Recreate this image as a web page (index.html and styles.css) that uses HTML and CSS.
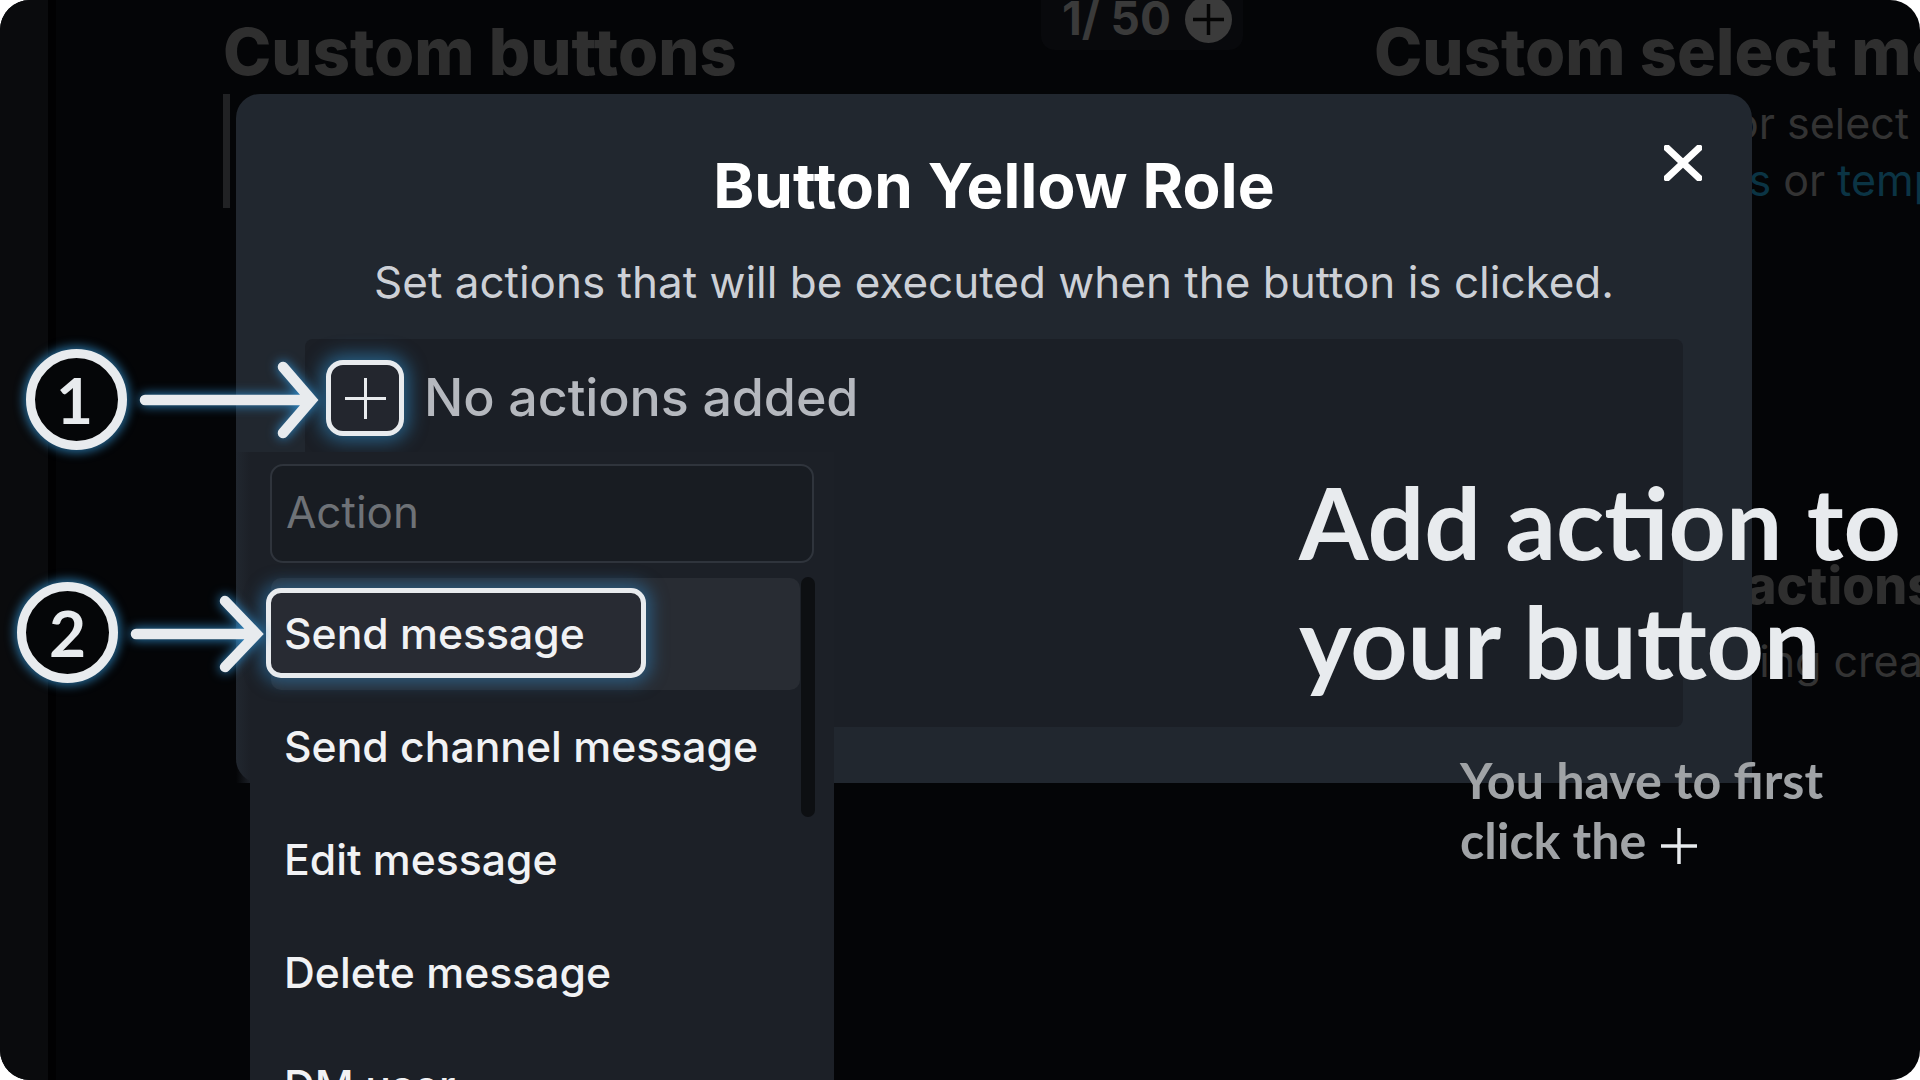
FILE: index.html
```html
<!DOCTYPE html>
<html lang="en">
<head>
<meta charset="utf-8">
<title>Button Yellow Role</title>
<link rel="stylesheet" href="styles.css">
</head>
<body>
<div class="screen">
  <div class="backdrop">
    <div class="rail"></div>
    <section class="col-buttons">
      <h2 class="bg-heading">Custom buttons</h2>
      <div class="bg-bar"></div>
    </section>
    <div class="counter">
      <span class="counter-text">1/ 50</span>
      <span class="counter-add"><svg viewBox="0 0 47 47" class="counter-icon"><path d="M8 23.5H39M23.5 8V39"/></svg></span>
    </div>
    <section class="col-menus">
      <h2 class="bg-heading">Custom select menus</h2>
      <p class="bg-line line-select">or select</p>
      <p class="bg-line line-links"><span class="bg-link">actions</span> or <span class="bg-link">templates</span></p>
      <p class="bg-strong">actions</p>
      <p class="bg-line line-crea">Saving creates</p>
    </section>
  </div>

  <div class="modal">
    <svg class="close" viewBox="0 0 38 36"><path d="M3 3L35 33M35 3L3 33"/></svg>
    <h1 class="modal-title">Button Yellow Role</h1>
    <p class="modal-sub">Set actions that will be executed when the button is clicked.</p>
    <div class="panel">
      <div class="add-row">
        <button class="add-btn"><svg viewBox="0 0 41 41" class="add-icon"><path d="M0 20.5H41M20.5 0V41"/></svg></button>
        <span class="add-label">No actions added</span>
      </div>
    </div>
    <div class="picker">
      <div class="picker-input">Action</div>
      <div class="menu">
        <div class="menu-scroll"></div>
        <div class="menu-hover"><span class="menu-selected">Send message</span></div>
        <div class="menu-item">Send channel message</div>
        <div class="menu-item">Edit message</div>
        <div class="menu-item">Delete message</div>
        <div class="menu-item">DM user</div>
      </div>
    </div>
  </div>

  <div class="callout callout-one">
    <div class="badge">1</div>
    <svg class="arrow arrow-one" viewBox="0 0 186 80"><path d="M9 40H172M147 7L175.500 40L147 73"/></svg>
  </div>
  <div class="callout callout-two">
    <div class="badge">2</div>
    <svg class="arrow arrow-two" viewBox="0 0 139 80"><path d="M8 41H124M97 8L128.500 41L97 74"/></svg>
  </div>

  <div class="hint">
    <p class="hint-title">Add action to<br>your button</p>
    <p class="hint-sub">You have to first<br>click the <svg viewBox="0 0 36 36" class="hint-plus"><path d="M0 18H36M18 0V36"/></svg></p>
  </div>
</div>
</body>
</html>
```
FILE: styles.css
```css
* { box-sizing: border-box; margin: 0; padding: 0; }
html, body { width: 1920px; height: 1080px; background: #fff; overflow: hidden; }
body { font-family: "Inter", "Liberation Sans", sans-serif; }

.screen {
  position: relative;
  width: 1920px;
  height: 1080px;
  border-radius: 30px;
  overflow: hidden;
  background: #040507;
}

/* dimmed page behind the modal */
.backdrop { display: flex; height: 100%; color: #2f2f2f; }
.rail { width: 56px; flex: none; background: #0a0b0d; border-right: 8px solid #010102; }
.col-buttons { width: 985px; flex: none; padding: 14px 0 0 167px; }
.bg-heading { font-size: 65px; font-weight: 800; line-height: 75px; white-space: nowrap; letter-spacing: 0; }
.bg-bar { width: 7px; height: 114px; margin-top: 5px; background: #212224; }
.counter {
  width: 202px; height: 50px; flex: none;
  display: flex; align-items: flex-start; gap: 14px;
  padding-left: 21px;
  background: #08090c;
  border-radius: 0 0 14px 14px;
}
.counter-text { font-size: 46px; font-weight: 700; line-height: 38px; margin-top: -1px; color: #3a3a3a; white-space: nowrap; }
.counter-add { width: 47px; height: 47px; flex: none; margin-top: -4px; border-radius: 50%; background: #3b3b3b; }
.counter-icon { display: block; fill: none; stroke: #050505; stroke-width: 3.5; }
.col-menus { flex: none; width: 546px; padding: 14px 0 0 0; margin-left: 131px; overflow: hidden; }
.bg-line { font-size: 43px; line-height: 50px; color: #333; white-space: nowrap; }
.line-select { margin: 9px 0 0 359px; }
.line-links { margin: 7px 0 0 250px; }
.bg-link { color: #0b3444; }
.bg-strong { margin: 351px 0 0 372px; font-size: 52px; font-weight: 800; line-height: 60px; color: #2f2f2f; }
.line-crea { margin: 20px 0 0 310px; }

/* modal */
.modal {
  position: absolute;
  left: 236px; top: 94px;
  width: 1516px; height: 689px;
  padding: 57px 69px 0;
  display: flex; flex-direction: column; align-items: center;
  background: #21272f;
  border-radius: 24px 24px 0 24px;
}
.close { position: absolute; right: 50px; top: 51px; width: 38px; height: 36px; fill: none; stroke: #fff; stroke-width: 7; stroke-linecap: round; }
.modal-title { font-size: 62px; font-weight: 700; line-height: 70px; color: #fff; white-space: nowrap; letter-spacing: 0.15px; }
.modal-sub { margin-top: 37px; font-size: 44px; line-height: 48px; color: #cdd0d6; white-space: nowrap; }
.panel { width: 100%; height: 388px; margin-top: 33px; padding: 21px; background: #1b1f26; border-radius: 8px; }
.add-row { display: flex; align-items: center; gap: 20px; }
.add-btn {
  width: 78px; height: 76px; flex: none;
  display: flex; align-items: center; justify-content: center;
  background: #23262e;
  border: 5px solid #e8ebee;
  border-radius: 17px;
  box-shadow: 0 0 18px 5px rgba(48, 140, 200, .6);
}
.add-icon { width: 41px; height: 41px; fill: none; stroke: #e8ebee; stroke-width: 3; }
.add-label { font-size: 52px; font-weight: 500; line-height: 76px; color: #b5b8be; white-space: nowrap; letter-spacing: -0.1px; }

/* dropdown */
.picker { position: absolute; left: 14px; top: 358px; width: 584px; height: 712px; padding-top: 12px; background: #1c2027; }
.picker::before {
  content: "";
  position: absolute;
  left: -14px; top: 0;
  width: 14px; height: 331px;
  background: linear-gradient(90deg, transparent, #1c2027);
}
.picker-input {
  height: 99px; margin: 0 20px;
  padding: 0 0 4px 14px;
  display: flex; align-items: center;
  background: #181c22;
  border: 2px solid #2f343c;
  border-radius: 13px;
  font-size: 44px; color: #6e7277;
}
.menu { position: relative; height: 601px; padding: 15px 34px 0 21px; }
.menu-scroll { position: absolute; left: 551px; top: 14px; width: 14px; height: 240px; border-radius: 7px; background: #0d0f12; }
.menu-hover { height: 112px; padding: 10px 0 0 0; background: #282c33; border-radius: 10px; }
.menu-selected {
  display: flex; align-items: center;
  width: 380px; height: 90px;
  margin-left: -5px;
  padding-left: 13px;
  background: #282b33;
  border: 5px solid #e8ebee;
  border-radius: 15px;
  box-shadow: 0 0 16px 6px rgba(48, 130, 190, .5);
  font-size: 42.7px; font-weight: 500; color: #f1f2f4; white-space: nowrap;
}
.menu-item { display: flex; align-items: center; height: 113px; padding: 0 0 1px 13px; font-size: 42.7px; font-weight: 500; color: #f1f2f4; white-space: nowrap; }

/* step callouts */
.callout { position: absolute; display: flex; align-items: center; }
.callout-one { left: 26px; top: 349px; gap: 9px; }
.callout-two { left: 17px; top: 582px; gap: 10px; }
.badge {
  width: 101px; height: 101px; flex: none;
  display: flex; align-items: center; justify-content: center;
  background: #050608;
  border: 9px solid #e8ebee;
  border-radius: 50%;
  box-shadow: 0 0 10px 3px rgba(48, 140, 200, .7);
  font-family: "Lato", sans-serif;
  font-size: 64px; font-weight: 700; line-height: 1; color: #e8ebee;
}
.callout-one .badge { padding-right: 4px; }
.arrow { display: block; height: 80px; flex: none; fill: none; stroke: #e8ebee; stroke-width: 10.5; stroke-linecap: round; filter: drop-shadow(0 0 6px #2f8fd0); }
.arrow-one { width: 186px; }
.arrow-two { width: 139px; }

/* hint */
.hint { position: absolute; left: 1299px; top: 462px; font-family: "Lato", sans-serif; white-space: nowrap; }
.hint-title { font-size: 100px; font-weight: 700; line-height: 119px; color: #e8ebee; font-variant-ligatures: common-ligatures discretionary-ligatures; }
.hint-sub { margin: 50px 0 0 161px; font-size: 50.2px; font-weight: 700; line-height: 60px; color: #a0a3a6; }
.hint-plus { display: inline-block; width: 36px; height: 36px; margin-left: 2px; vertical-align: -5px; fill: none; stroke: #e8ebee; stroke-width: 3.5; }
```
